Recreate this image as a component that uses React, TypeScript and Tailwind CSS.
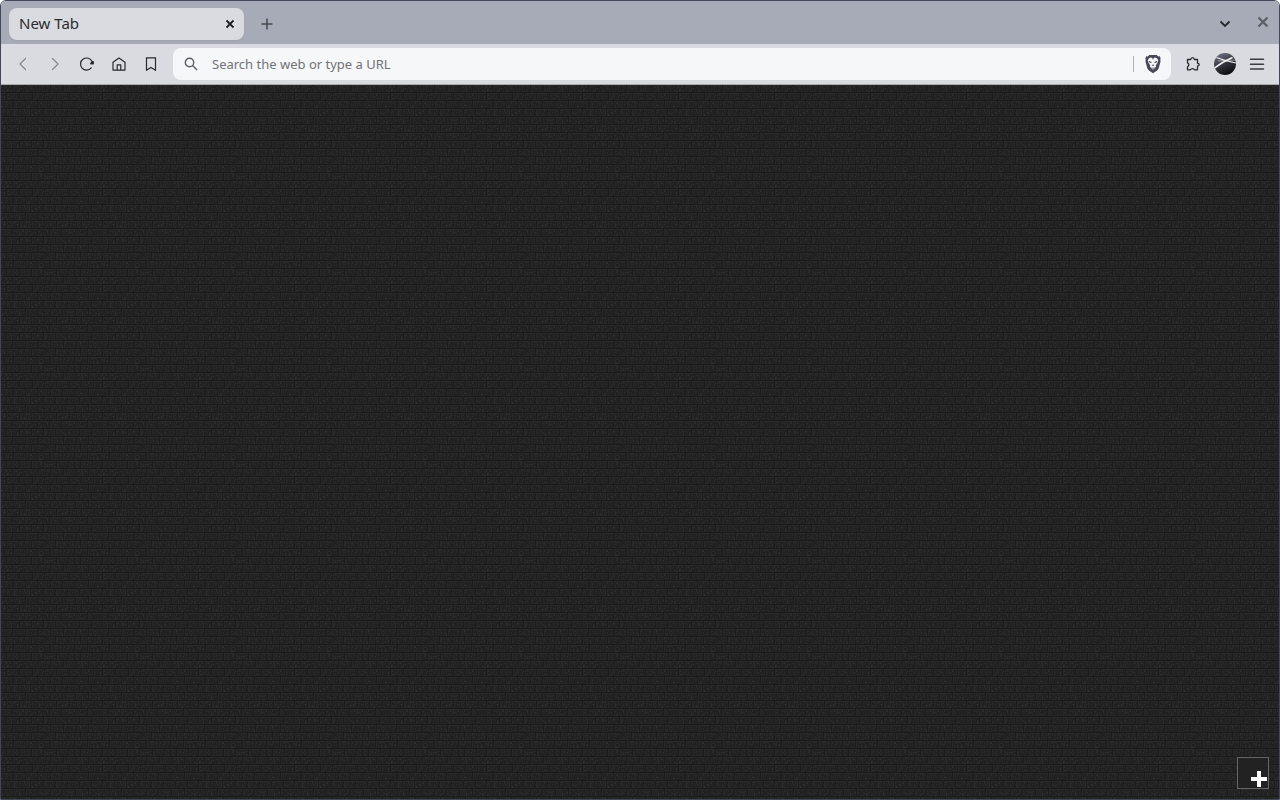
import type { ReactNode } from "react"

// x positions of the vertical joints, one list for each 8px course
const courses = [
  [12, 25, 38, 50, 63, 76, 88],
  [6, 19, 32, 44, 56, 69, 81, 93],
  [13, 25, 37, 50, 62, 75, 88],
  [6, 18, 30, 43, 55, 67, 79, 91],
  [13, 25, 37, 50, 62, 75, 88],
  [6, 19, 31, 44, 56, 69, 81, 94],
  [12, 24, 37, 49, 61, 75, 87],
  [6, 19, 31, 43, 55, 67, 79, 91],
  [12, 25, 38, 50, 63, 76, 88],
  [6, 18, 31, 43, 55, 68, 80, 93],
  [13, 25, 37, 50, 62, 74, 87],
  [6, 19, 31, 43, 56, 68, 80, 92],
]

function BrickWall() {
  return (
    <svg className="absolute inset-0 h-full w-full" aria-hidden="true">
      <defs>
        <filter id="grain" x="0" y="0" width="96" height="96" filterUnits="userSpaceOnUse">
          <feTurbulence type="fractalNoise" baseFrequency="0.6" numOctaves="2" seed="4" stitchTiles="stitch" />
          <feColorMatrix values="0 0 0 0 1  0 0 0 0 1  0 0 0 0 1  0.25 0 0 0 -0.125" />
        </filter>
        <pattern id="bricks" width="96" height="96" patternUnits="userSpaceOnUse">
          <rect width="96" height="96" fill="#212121" />
          <rect width="96" height="96" filter="url(#grain)" />
          {courses.map((joints, row) => (
            <g key={row}>
              <rect x="0" y={row * 8 + 7} width="96" height="1" fill="#1b1b1b" />
              <rect x="0" y={row * 8} width="96" height="1" fill="#282828" />
              {joints.map((x) => (
                <g key={x}>
                  <rect x={x - 1} y={row * 8} width="1" height="8" fill="#1d1d1d" />
                  <rect x={x} y={row * 8 + 1} width="1" height="6" fill="#272727" />
                </g>
              ))}
            </g>
          ))}
        </pattern>
      </defs>
      <rect width="100%" height="100%" fill="url(#bricks)" />
    </svg>
  )
}

function ToolButton({ label, muted, children }: { label: string; muted?: boolean; children: ReactNode }) {
  return (
    <button
      type="button"
      aria-label={label}
      className={`flex h-8 w-8 shrink-0 items-center justify-center ${muted ? "text-[#85868b]" : "text-[#27282c]"}`}
    >
      {children}
    </button>
  )
}

function Icon({ children, width = 1.2 }: { children: ReactNode; width?: number }) {
  return (
    <svg
      className="h-4 w-4"
      viewBox="0 0 16 16"
      fill="none"
      stroke="currentColor"
      strokeWidth={width}
      strokeLinecap="round"
      strokeLinejoin="round"
      aria-hidden="true"
    >
      {children}
    </svg>
  )
}

function BraveLion() {
  return (
    <svg className="h-5 w-4" viewBox="0 0 16 20" aria-hidden="true">
      <path
        d="M4.2 1h7.6l1.3 1.4 1.7-.2.9 2.2-.5 1.4.4 1.5-1.8 6.8c-.3 1-.8 1.7-1.7 2.3L8 19.2l-4.1-2.8c-.9-.6-1.4-1.3-1.7-2.3L.4 7.3l.4-1.5-.5-1.4.9-2.2 1.7.2z"
        fill="#4a4858"
      />
      <path
        d="M8 4.2l2-.8 2 .9 1.2 2-.8 2.7-1.6 2.2.2 1.6L8 15.800l-3-3 .2-1.600L3.600 9l-.8-2.700L4 4.300l2-.9z"
        fill="#f6f7f9"
      />
      <path
        d="M3.8 7l2.9.9-.4 1.2-2.1-.7zM12.2 7l-2.9.9.4 1.2 2.1-.7zM6.6 10.8h2.8L8 12.3zM6 13l2 1 2-1-2 1.9zM6.5 4.500h3L8 5.500z"
        fill="#4a4858"
      />
    </svg>
  )
}

function Avatar() {
  return (
    <svg className="h-[22px] w-[22px]" viewBox="0 0 22 22" aria-hidden="true">
      <defs>
        <linearGradient id="orb" x1="0.25" y1="0" x2="0.7" y2="1">
          <stop offset="0" stopColor="#6c7080" />
          <stop offset="0.5" stopColor="#34363e" />
          <stop offset="1" stopColor="#08090a" />
        </linearGradient>
        <clipPath id="orb-edge">
          <circle cx="11" cy="11" r="11" />
        </clipPath>
      </defs>
      <g clipPath="url(#orb-edge)" fill="none" stroke="#f4f4f6">
        <rect width="22" height="22" fill="url(#orb)" stroke="none" />
        <path d="M0 15.5Q8 9 18.500 4.500" strokeWidth="1.500" />
        <path d="M2.500 4.500Q11 8 22 10" strokeWidth="1.200" />
        <path d="M4 8Q12 6.500 22 7.200" strokeWidth="0.5" />
      </g>
    </svg>
  )
}

function TabStrip() {
  return (
    <div className="flex h-[43px] items-start bg-[#a7abb7] pl-2 pt-[7px]">
      <div className="flex h-8 w-[235px] items-center justify-between rounded-lg bg-[#dadbe0] pl-[10px] pr-[6px] shadow-xs">
        <span className="pb-[2px] text-[15px] leading-5 text-[#2a2b2f]">New Tab</span>
        <button type="button" aria-label="Close tab" className="flex h-4 w-4 items-center justify-center text-[#1d1e20]">
          <Icon width={1.8}>
            <path d="M4.500 4.500l7 7M11.500 4.500l-7 7" strokeLinecap="butt" />
          </Icon>
        </button>
      </div>
      <button type="button" aria-label="New tab" className="ml-[15px] flex h-8 w-4 items-center justify-center text-[#45474d]">
        <Icon width={1.5}>
          <path d="M8 2.500v11M2.500 8h11" strokeLinecap="butt" />
        </Icon>
      </button>
      <div className="ml-auto flex items-start gap-[6px]">
        <button type="button" aria-label="Search tabs" className="flex h-8 w-8 items-center justify-center text-[#27282c]">
          <Icon width={1.8}>
            <path d="M3.500 5.500L8 10l4.500-4.500" strokeLinecap="butt" strokeLinejoin="miter" />
          </Icon>
        </button>
        <button type="button" aria-label="Close window" className="flex h-7 w-8 items-center justify-center text-[#5c5f67]">
          <Icon width={2.2}>
            <path d="M3.500 3.500l9 9M12.500 3.500l-9 9" strokeLinecap="butt" />
          </Icon>
        </button>
      </div>
    </div>
  )
}

function Toolbar() {
  return (
    <div className="flex h-[41px] items-center border-b border-[#a9aaae] bg-[#dadbe0] px-[6px]">
      <ToolButton label="Back" muted>
        <Icon>
          <path d="M10.500 2.500L5 8l5.500 5.500" />
        </Icon>
      </ToolButton>
      <ToolButton label="Forward" muted>
        <Icon>
          <path d="M5.500 2.500L11 8l-5.500 5.500" />
        </Icon>
      </ToolButton>
      <ToolButton label="Reload">
        <Icon>
          <path d="M12.2 11.800A6 6 0 1 1 13 5.600" />
          <path d="M14 5.800v1.700h-2z" fill="currentColor" strokeWidth="1.8" />
        </Icon>
      </ToolButton>
      <ToolButton label="Home">
        <Icon>
          <path d="M2 6.200L8 2l6 4.200v7.900H2zM6.200 14V8.800h3.600V14" />
        </Icon>
      </ToolButton>
      <ToolButton label="Bookmark this tab">
        <Icon>
          <path d="M3.500 1.800h9v12.400L8 11.500l-4.500 2.700z" strokeLinejoin="miter" />
        </Icon>
      </ToolButton>
      <form className="ml-[6px] flex h-8 min-w-0 flex-1 items-center rounded-lg bg-[#f6f7f9] px-[10px]">
        <span className="text-[#5c5e63]">
          <Icon width={1.4}>
            <circle cx="6.500" cy="6.500" r="4.200" />
            <path d="M9.800 9.800l3.800 3.800" />
          </Icon>
        </span>
        <input
          type="text"
          aria-label="Address and search bar"
          placeholder="Search the web or type a URL"
          className="ml-[13px] h-8 min-w-0 flex-1 bg-transparent text-[13px] text-[#27282c] outline-none placeholder:text-[#717276]"
        />
        <span className="mr-[11px] h-4 w-px bg-[#b0b1b5]" />
        <button type="button" aria-label="Brave Shields" className="flex h-5 w-4 items-center justify-center">
          <BraveLion />
        </button>
      </form>
      <div className="ml-[6px] flex">
        <ToolButton label="Extensions">
          <Icon width={1.3}>
            <path d="M2.500 3.500h3.200c.4-2.600 3.200-2.600 3.600 0h3.200v3.700c2.300.6 2.300 2.400 0 3v3.600H9.600c-.8-1.600-3.400-1.600-4.200 0H2.500v-3c1.800-1 1.800-3.200 0-4z" />
          </Icon>
        </ToolButton>
        <ToolButton label="Profile">
          <Avatar />
        </ToolButton>
        <ToolButton label="Menu">
          <Icon width={1.5}>
            <path d="M1.500 3.300h13M1.500 8.200h13M1.500 13.100h13" stroke="#3a3b40" />
          </Icon>
        </ToolButton>
      </div>
    </div>
  )
}

export default function App() {
  return (
    <div className="bg-white">
      <div className="flex h-screen flex-col overflow-hidden rounded-t-md border border-[#44475a] font-['Noto_Sans',sans-serif]">
        <TabStrip />
        <Toolbar />
        <main className="relative flex-1 bg-[#212121]">
          <BrickWall />
          <button
            type="button"
            aria-label="Add"
            className="absolute bottom-[10px] right-[10px] flex h-8 w-8 items-end justify-end border border-[#666666] bg-[#222222] text-white"
          >
            <svg className="h-[17px] w-[17px]" viewBox="0 0 17 17" aria-hidden="true">
              <path d="M6 0h4v6h6v4h-6v6H6v-6H0V6h6z" fill="currentColor" />
            </svg>
          </button>
        </main>
      </div>
    </div>
  )
}
